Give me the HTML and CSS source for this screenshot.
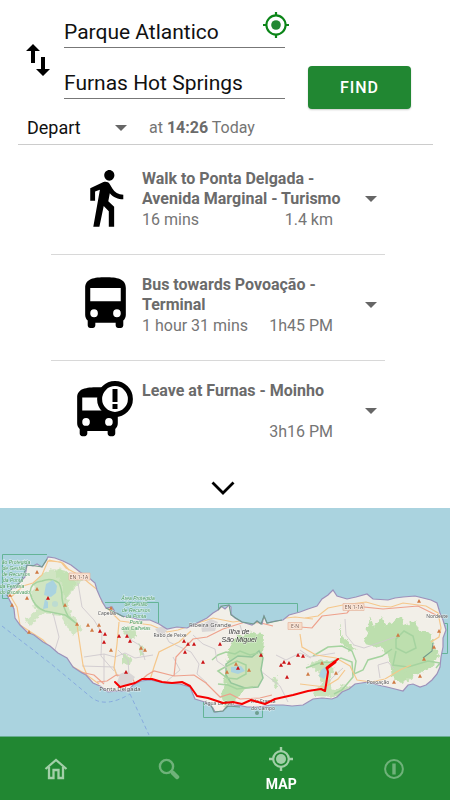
FILE: index.html
```html
<!DOCTYPE html>
<html lang="en">
<head>
<meta charset="utf-8">
<meta name="viewport" content="width=device-width, initial-scale=1">
<title>Route planner</title>
<link rel="stylesheet" href="styles.css">
</head>
<body>
<main class="planner">
  <form class="search">
    <button class="icon-button swap" type="button" aria-label="Swap origin and destination">
      <svg width="24" height="32" viewBox="0 0 24 32"><path d="M0 7L7 0l7 7H9v12H5V7zM10 25l7 7 7-7h-5V13h-4v12z"/></svg>
    </button>
    <div class="fields">
      <div class="field">
        <input class="place" type="text" aria-label="From" value="Parque Atlantico">
        <button class="icon-button locate" type="button" aria-label="Use my location">
          <svg width="26" height="26" viewBox="0 0 26 26"><circle cx="13" cy="13" r="9.6" fill="none" stroke="#0b8518" stroke-width="2.1"/><circle cx="13" cy="13" r="4.8" fill="#218732"/><path d="M13 0v4M13 22v4M0 13h4M22 13h4" stroke="#0b8518" stroke-width="2.2"/></svg>
        </button>
      </div>
      <div class="field">
        <input class="place" type="text" aria-label="To" value="Furnas Hot Springs">
      </div>
    </div>
    <button class="find" type="submit">FIND</button>
  </form>

  <div class="when">
    <div class="select-wrap">
      <select class="mode" aria-label="Time mode"><option>Depart</option><option>Arrive</option></select>
      <svg class="caret" width="12" height="6" viewBox="0 0 12 6"><path d="M0 0h12L6 6z"/></svg>
    </div>
    <span class="time">at <strong>14:26</strong> Today</span>
  </div>

  <ol class="steps">
    <li class="step">
      <svg class="step-icon" width="61" height="64" viewBox="0 0 24 24" preserveAspectRatio="none"><path d="M13.5 5.5c1.1 0 2-.9 2-2s-.9-2-2-2-2 .9-2 2 .9 2 2 2zM9.8 8.9L7.2 22.8h2.4l1.7-7.8 2 2v5.8h2.1v-7.5l-2.3-2.1.6-3c1.3 1.5 3.3 2.3 5.3 2.3v-1.7c-1.9-.2-3.5-1-4.3-2.4l-1-1.6c-.4-.6-1-.9-1.7-.9-.3 0-.5 0-.8.1L6 8.3V13h1.9V9.6z"/></svg>
      <div class="step-text">
        <h2 class="step-title">Walk to Ponta Delgada - Avenida Marginal - Turismo</h2>
        <p class="meta"><span>16 mins</span><span>1.4 km</span></p>
      </div>
      <button class="icon-button expand" type="button" aria-label="Show walk details"><svg class="caret" width="12" height="6" viewBox="0 0 12 6"><path d="M0 0h12L6 6z"/></svg></button>
    </li>
    <li class="step">
      <svg class="step-icon" width="61" height="64" viewBox="0 0 24 24" preserveAspectRatio="none"><path fill-rule="evenodd" d="M4 16c0 .88.39 1.67 1 2.22V20c0 .55.45 1 1 1h1c.55 0 1-.45 1-1v-1h8v1c0 .55.45 1 1 1h1c.55 0 1-.45 1-1v-1.78c.61-.55 1-1.34 1-2.22V6c0-3.5-3.58-4-8-4s-8 .5-8 4zm3.5 1a1.5 1.5 0 1 1 0-3 1.5 1.5 0 0 1 0 3zm9 0a1.5 1.5 0 1 1 0-3 1.5 1.5 0 0 1 0 3zM18 11H6V6h12z"/></svg>
      <div class="step-text">
        <h2 class="step-title">Bus towards Povoação - Terminal</h2>
        <p class="meta"><span>1 hour 31 mins</span><span>1h45 PM</span></p>
      </div>
      <button class="icon-button expand" type="button" aria-label="Show bus details"><svg class="caret" width="12" height="6" viewBox="0 0 12 6"><path d="M0 0h12L6 6z"/></svg></button>
    </li>
    <li class="step">
      <svg class="step-icon" width="61" height="64" viewBox="0 0 61 64"><g transform="translate(-8 4) scale(2.54 2.58)"><path fill-rule="evenodd" d="M4 16c0 .88.39 1.67 1 2.22V20c0 .55.45 1 1 1h1c.55 0 1-.45 1-1v-1h8v1c0 .55.45 1 1 1h1c.55 0 1-.45 1-1v-1.78c.61-.55 1-1.34 1-2.22V6c0-3.5-3.58-4-8-4s-8 .5-8 4zm3.5 1a1.5 1.5 0 1 1 0-3 1.5 1.5 0 0 1 0 3zm9 0a1.5 1.5 0 1 1 0-3 1.5 1.5 0 0 1 0 3zM18 11H6V6h12z"/></g><circle cx="40" cy="21" r="15.4" fill="#fff" stroke="#000" stroke-width="5"/><path d="M37.5 11h5v13h-5zM37.5 26h5v5h-5z"/></svg>
      <div class="step-text">
        <h2 class="step-title">Leave at Furnas - Moinho</h2>
        <p class="meta"><span></span><span>3h16 PM</span></p>
      </div>
      <button class="icon-button expand" type="button" aria-label="Show stop details"><svg class="caret" width="12" height="6" viewBox="0 0 12 6"><path d="M0 0h12L6 6z"/></svg></button>
    </li>
  </ol>
  <button class="icon-button more" type="button" aria-label="Show map only">
    <svg width="24" height="14" viewBox="0 0 24 14"><path d="M1.500 1.500L12 12 22.500 1.500" fill="none" stroke="#000" stroke-width="2.800"/></svg>
  </button>
</main>

<section class="map" aria-label="Route map">
  <svg viewBox="0 508 450 228" preserveAspectRatio="xMidYMid slice">
    <defs>
      <path id="island" d="M7 595L12 588 16 588 20 582 25 577 27 565 33 566 37 564 42 567 46 561 48 557 55 558 63 561 71 565 80 572 88 577 95 583 97 590 100 597 103 603 106 608 112 607 115 612 122 616 133 618 141 620 150 620 159 624 167 629 177 627 187 628 197 623 207 618 213 613 218 610 221 606 225 609 229 605 231 607 231 614 235 618 242 622 252 625 257 621 262 624 264 616 267 623 275 621 283 620 289 615 300 612 308 609 317 606 322 599 328 595 333 590 337 596 347 599 356 597 367 594 373 599 388 600 395 598 403 597 415 596 423 598 431 600 437 603 440 613 443 620 446 630 443 638 443 647 441 657 440 667 437 674 432 680 426 685 420 687 413 684 408 685 403 691 395 689 387 687 378 685 368 682 355 684 349 689 342 692 337 697 332 699 322 698 313 699 308 702 303 705 292 706 283 705 271 705 260 707 247 707 238 705 227 706 223 711 215 712 213 708 208 703 195 699 190 687 180 684 165 683 150 680 141 681 133 685 128 691 117 691 108 692 100 686 93 683 86 675 82 673 73 667 67 658 58 653 50 646 43 642 34 635 27 632 20 625 15 618 14 609z"/>
      <clipPath id="land"><use href="#island"/></clipPath>
      <path id="peak" d="M-2 1.8L0-2 2 1.8z"/>
      <filter id="ragged" x="-10%" y="-10%" width="120%" height="120%"><feTurbulence type="fractalNoise" baseFrequency=".22" numOctaves="2" seed="4"/><feDisplacementMap in="SourceGraphic" scale="7" xChannelSelector="R" yChannelSelector="G"/></filter>
    </defs>
    <path fill="#aad3df" d="M0 508h450v228H0z"/>
    <g fill="none" stroke="#7d9fdd" stroke-width=".8" stroke-dasharray="4 3"><path d="M2 626L50 663 92 698Q106 708 130 694M130 694L149 735"/></g>
    <g fill="none" stroke="#64b497" stroke-width="1"><path d="M2.500 554.500H47M2.500 554.500V598.500H8M105 602.500H158.500V624M218.500 610V603.500H297.500V612M203.500 702V717.500H262.500V708M443 623.500H447.500V653.500H441"/></g>
    <use href="#island" fill="#f2efe8"/>
    <g clip-path="url(#land)">
      <g fill="#bddfae" filter="url(#ragged)">
        <path opacity=".65" d="M31 592L38 577 50 569 78 574 82 580 67 598 70 612 83 630 73 636 60 615 42 613 31 626 25 620 36 610z"/>
        <path opacity=".7" d="M54 568l26 8-15 24-3-15z"/>
        <path d="M236 636l18-4 10 3-1 22-12 16-8 19-16 16-6-11 5-22 3-26z"/>
        <path d="M370 616l4 11 9-11 2 10 17-10 1 9 12-4 4 9 11 3 3 11 6 12-7 11-14 7-17 9-9-6-2-16-7-12-18-5z"/>
        <path d="M340 622l2 14 9 8 6 4-8 3-9-9z"/>
        <path opacity=".8" d="M309 664l10-4 12 3 2 8-4 12 4 8 10-6 9 3-13 10-23-1-4-5 10-9-2-9z"/>
        <path opacity=".8" d="M403 674l8-4 4-6 2 9-9 10zM140 644l5 9-5 4-2-8zM122 654l10 3-2 8-8-1zM272 680l5-3 2 8-4 3zM121 628l12-2 5 10-8 3z"/>
      </g>
      <path d="M226 664l12-8 14 1 7-6 4 7-2 12 2 8-5 9-13 1-14-5-5-8z" fill="#cfe2bb" stroke="#95c69b" stroke-width="1.500"/>
      <g fill="none" stroke="#a5d39f" stroke-width="1.500">
        <path d="M30 592q1-10 12-11 9-4 17 2 3 6 3 15 1 9 6 18l10 9M30 592q3 15 15 19l20 4 12 9"/>
        <path d="M212 660l6-5 8-3 9 2 5-3 10 4 8-2M218 671l9-5 10-5 9 4v9l-9 5-10-1zM218 684l10 1 9 4 16-2M313 656l15-9 14-1 10 5 4 10-2 13 9-4 5-10 14-4 10-7M396 639l8-8 9 5 3 12-10 5-10-5zM396 651l-3 14 15 2 20-6 12 2-4 5"/>
        <path d="M306 668l13-5 12-1 10-4 11 4 1 15-11 13-8 4"/>
      </g>
      <g fill="none" stroke="#cfc9ce" stroke-width=".9">
        <path d="M78 583l4 24 12 13 8 13-1 23 13 15M53 613l6 24-4 13M84 657l20-3 11 3 10-4 10 5 18-3M82 666l32 1 4 10M104 654v29M118 650l10 10 1 15M164 632l5 10 22 10 8 12-2 10 10 9M173 657l7 13-13 11M193 635l10 9 12 5 2 12 10 7M276 655l10 5 14-7 11 5M262 672l18 14 8 16M300 650l10 7 25-4M345 619l1 16 8 10 10 3 20-7 11-4M380 678l-2-13 10-3 6 7M323 688l10-11 10-9M125 630l6 10 10 6 4 14M240 625l3 10"/>
      </g>
      <g fill="none" stroke="#f5c78b" stroke-width="1.200">
        <path d="M11 597l12-11 10-3 9-8 6-14 13 1 5 6 15 8 8 7 10 8 3 11 10 11 8 8 31 4 16 7 11-2 20-7 15-5 20 4 15-2 12-2 18 1 17-2 18 2M11 597l6 10 3 18 23 15 13 14 12 10 16 9 15 11M77 625l3 20 3 20 4 10M119 622l-2 22-3 24 3 8M49 560l14 3 6 7M150 680l4-13 5-15 20-10 12-11M305 618l13-2 10-8 15-3 23-3 14 4 11 1 12-4 23 3 12 7 3 15-2 9-8 5M300 634l2 13 14 8 20 3 14 8 7 14 14 2 14-3 15-9 11-5M300 684l25 3 13-8 7-9"/>
      </g>
      <g fill="none" stroke="#eea18c" stroke-width="1.200"><path d="M97 682l10-1 9-6 15 1 5 9 11-10 7-4 20 5 20-1 12 8 14 14 10-3 10 5 20-1 12-3M174 676l2-19 17-18 14-2 16-8 22-7 16 1 12 3M300 627l12 1 10-12 25-3 6-7 30 3 35-3 18 9M80 672l14 3 10 9"/></g>
      <g fill="#aad3df"><path d="M46 584l7-4 4 6-1 7-5 4-7-2zM45 599l3 3v6l-5 1zM231 667l10-1 4 5-7 3-7-2zM321 670l4-3 3 5-4 7-5-3z"/><circle cx="55" cy="604" r="3" opacity=".5"/></g>
      <path d="M155 629l8-3 4 5-7 5zM201 625l10-6 7 3-3 9-13 1zM120 674l7-3 8 6-6 9-13-1z" fill="#d9d6d6"/>
    </g>
    <use href="#island" fill="none" stroke="#9d91ba" stroke-width="1.200"/>
    <path d="M7 596l5-8 9-6 6-17 9 1 6 1 5-8M106 608l8 4 10 5M218 610l4-4 7-1 2 10 11 7 12 2 3-3 4 3 3-8 3 7 15-3M210 703l4 9 9-1 5-5 12 1M433 643l-1 8-9 7" fill="none" stroke="#719c8c" stroke-width="1.100"/>
    <g fill="#cb1115">
      <use href="#peak" x="48" y="598"/><use href="#peak" x="100" y="631"/><use href="#peak" x="105" y="634"/><use href="#peak" x="104" y="642"/><use href="#peak" x="119" y="636"/><use href="#peak" x="127" y="636"/><use href="#peak" x="130" y="641"/><use href="#peak" x="126" y="672"/><use href="#peak" x="184" y="641"/><use href="#peak" x="188" y="644"/><use href="#peak" x="194" y="644"/><use href="#peak" x="185" y="652"/><use href="#peak" x="203" y="662"/><use href="#peak" x="220" y="644"/><use href="#peak" x="238" y="668"/><use href="#peak" x="261" y="655"/><use href="#peak" x="281" y="665"/><use href="#peak" x="284" y="662"/><use href="#peak" x="289" y="663"/><use href="#peak" x="287" y="677"/><use href="#peak" x="298" y="655"/><use href="#peak" x="303" y="656"/>
    </g>
    <g fill="#cf7a43">
      <use href="#peak" x="37" y="572"/><use href="#peak" x="37" y="589"/><use href="#peak" x="27" y="598"/><use href="#peak" x="10" y="595"/><use href="#peak" x="12" y="605"/><use href="#peak" x="65" y="605"/><use href="#peak" x="77" y="624"/><use href="#peak" x="88" y="625"/><use href="#peak" x="92" y="630"/><use href="#peak" x="99" y="625"/><use href="#peak" x="29" y="632"/><use href="#peak" x="111" y="608"/><use href="#peak" x="111" y="650"/><use href="#peak" x="141" y="648"/><use href="#peak" x="145" y="650"/><use href="#peak" x="227" y="672"/><use href="#peak" x="236" y="664"/><use href="#peak" x="249" y="670"/><use href="#peak" x="322" y="663"/><use href="#peak" x="308" y="674"/><use href="#peak" x="336" y="673"/><use href="#peak" x="398" y="635"/><use href="#peak" x="419" y="601"/><use href="#peak" x="439" y="631"/><use href="#peak" x="424" y="659"/><use href="#peak" x="420" y="676"/><use href="#peak" x="394" y="682"/><use href="#peak" x="434" y="647"/>
    </g>
    <circle cx="257" cy="713" r="2" fill="#6e9e8e"/>
    <g fill="#f7dcc9" stroke="#e5b8a0" stroke-width=".7"><path d="M69 573h21v7H69zM343 603.500h21v7h-21zM288 622.500h14v7h-14z"/></g>
    <g class="road-label"><text x="79" y="579">EN 1-1A</text><text x="354" y="609">EN 1-1A</text><text x="295" y="628">E-N</text></g>
    <g class="area-label">
      <text x="16" y="564">ão Protegida</text><text x="14" y="570">de Gestão</text><text x="16" y="576">de Recursos</text><text x="13" y="582">da Ponta</text><text x="12" y="588">da Ferraria</text><text x="15" y="594">do Escalvado</text>
      <text x="138" y="600">Área Protegida</text><text x="136" y="606">de Gestão</text><text x="136" y="612">de Recursos</text><text x="136" y="618">da Ponta</text><text x="136" y="624">Ponta</text><text x="136" y="630">das Calhetas</text>
    </g>
    <g class="town-label">
      <text class="city" x="120" y="691">Ponta Delgada</text><text class="city" x="210" y="627">Ribeira Grande</text><text x="107" y="615">Capelas</text><text x="170" y="637">Rabo de Peixe</text><text x="437" y="618">Nordeste</text><text x="378" y="684">Povoação</text><text x="219" y="705">Água de Pau</text><text x="263" y="703">Vila Franca</text><text x="263" y="710">do Campo</text>
    </g>
    <g class="isle"><text x="239" y="634">Ilha de</text><text x="239" y="642">São Miguel</text></g>
    <g fill="none" stroke="#f60000" stroke-linejoin="round" stroke-linecap="round"><path d="M115 682l5 5 15-4 7-4 10 0 10 3 10 1 10-1 8 4 7 10 11 2 15 5 10-1 9 2 9-4 14 4 10-5 18-4 15-4 13-2 4 2 1-6 2-13-1-4 5-4 6-5" stroke-width="2"/><path d="M327 668l8-6" stroke-width="3"/></g>
  </svg>
</section>

<nav class="tabs" aria-label="Main">
  <a class="tab home" href="#home" aria-label="Home"><svg width="24" height="22" viewBox="0 0 24 22"><path d="M1.500 11L12 2l10.500 9M5 9v11h4.500v-8h5v8H19V9" fill="none" stroke="currentColor" stroke-width="2.300"/></svg></a>
  <a class="tab" href="#search" aria-label="Search"><svg width="22" height="22" viewBox="0 0 22 22" fill="none" stroke="currentColor"><circle cx="8.500" cy="8.500" r="6.600" stroke-width="2.400"/><path d="M12.500 12.500l2 2" stroke-width="3"/><path d="M15 15l4 4" stroke-width="4.500" stroke-linecap="round"/></svg></a>
  <a class="tab current" href="#map" aria-current="page"><svg width="24" height="24" viewBox="0 0 24 24"><circle cx="12" cy="12" r="7.800" fill="none" stroke="currentColor" stroke-width="2.200"/><circle cx="12" cy="12" r="5" fill="currentColor"/><path d="M12 0v4M12 20v4M0 12h4M20 12h4" stroke="currentColor" stroke-width="2.400"/></svg><span class="tab-name">MAP</span></a>
  <a class="tab" href="#info" aria-label="Information"><svg width="22" height="22" viewBox="0 0 22 22"><circle cx="11" cy="11" r="8.900" fill="none" stroke="currentColor" stroke-width="2"/><path d="M9.300 5.500h3.400v11H9.300z" fill="currentColor"/></svg></a>
</nav>
</body>
</html>
```
FILE: styles.css
```css
* {
  box-sizing: border-box;
}

body {
  margin: 0;
  min-height: 100vh;
  display: flex;
  flex-direction: column;
  background: #fff;
  color: #6b6b6b;
  font: 16px/20px Roboto, sans-serif;
}

button,
input,
select {
  font: inherit;
  border: 0;
  padding: 0;
  margin: 0;
  background: none;
  border-radius: 0;
}

svg {
  display: block;
}

.icon-button {
  display: flex;
  align-items: center;
  justify-content: center;
}

.search {
  display: grid;
  grid-template-columns: 24px 1fr 103px;
  padding: 16px 39px 0 26px;
}

.swap {
  align-self: start;
  margin-top: 28px;
}

.fields {
  margin: 0 23px 0 14px;
  display: grid;
  gap: 19px;
}

.field {
  position: relative;
}

.place {
  display: block;
  width: 100%;
  height: 32px;
  border-bottom: 1px solid #777;
  color: #111;
  font-size: 21px;
  line-height: 30px;
}

.locate {
  position: absolute;
  right: -4px;
  top: -4px;
}

.find {
  align-self: end;
  height: 43px;
  margin-bottom: -10px;
  border-radius: 4px;
  background: #218732;
  color: #fff;
  font-weight: 500;
  letter-spacing: 1px;
  box-shadow: 0 1px 2px #0003;
}

.when {
  display: flex;
  align-items: center;
  gap: 22px;
  margin: 12px 17px 0 18px;
  padding: 0 9px;
  height: 34px;
  border-bottom: 1px solid #ccc;
}

.when strong {
  font-weight: 700;
  color: #6b6b6b;
}

.time,
.meta {
  color: #757575;
}

.select-wrap {
  display: grid;
  align-items: center;
  width: 100px;
}

.mode {
  grid-area: 1 / 1;
  width: 100%;
  appearance: none;
  color: #111;
  font-size: 18px;
  line-height: 24px;
}

.select-wrap .caret {
  grid-area: 1 / 1;
  justify-self: end;
  pointer-events: none;
}

.caret {
  fill: #666;
}

.steps {
  list-style: none;
  margin: 4px 65px 0 51px;
  padding: 0;
}

.step {
  display: grid;
  grid-template-columns: 61px 1fr 28px;
  column-gap: 6px;
  padding: 20px 0 23px 24px;
  border-bottom: 1px solid #d8d8d8;
}

.step:last-child {
  border-bottom: 0;
  padding-bottom: 13px;
}

.step-icon {
  margin-top: -3px;
  overflow: visible;
}

.step-title {
  margin: 0;
  min-height: 40px;
  font-size: 16px;
  line-height: 20px;
  font-weight: 700;
}

.meta {
  display: flex;
  justify-content: space-between;
  margin: 0;
  padding-right: 18px;
  line-height: 22px;
}

.expand {
  align-self: start;
  height: 60px;
}

.more {
  margin: 0 auto;
  height: 52px;
  padding: 12px 4px 0 0;
}

.map {
  flex: 1;
  min-height: 228px;
  display: grid;
  border-bottom: 1px solid #68ad91;
  background: #aad3df;
}

.map svg {
  width: 100%;
  height: 100%;
}

.map text {
  text-anchor: middle;
  font-family: "Noto Sans", sans-serif;
  paint-order: stroke;
  stroke: #ffffff99;
  stroke-width: 1px;
}

.road-label {
  font-size: 5px;
  fill: #795444;
}

.map .area-label text {
  font-family: "Liberation Sans", sans-serif;
  font-size: 5px;
  font-style: italic;
  fill: #429758;
}

.town-label {
  font-size: 5px;
  fill: #555;
}

.city {
  font-size: 6px;
}

.map .isle text {
  font-family: "Liberation Sans", sans-serif;
  font-size: 7px;
  font-style: italic;
  fill: #333;
}

.tabs {
  display: grid;
  grid-template-columns: repeat(4, 1fr);
  height: 64px;
  background: #218732;
}

.tab {
  display: flex;
  flex-direction: column;
  align-items: center;
  justify-content: center;
  color: #6fb27a;
  text-decoration: none;
}

.home,
.current {
  color: #a2cfa8;
}

.current {
  padding-top: 2px;
}

.tab-name {
  margin-top: 4px;
  color: #fff;
  font-size: 14px;
  line-height: 18px;
  font-weight: 700;
}
```
